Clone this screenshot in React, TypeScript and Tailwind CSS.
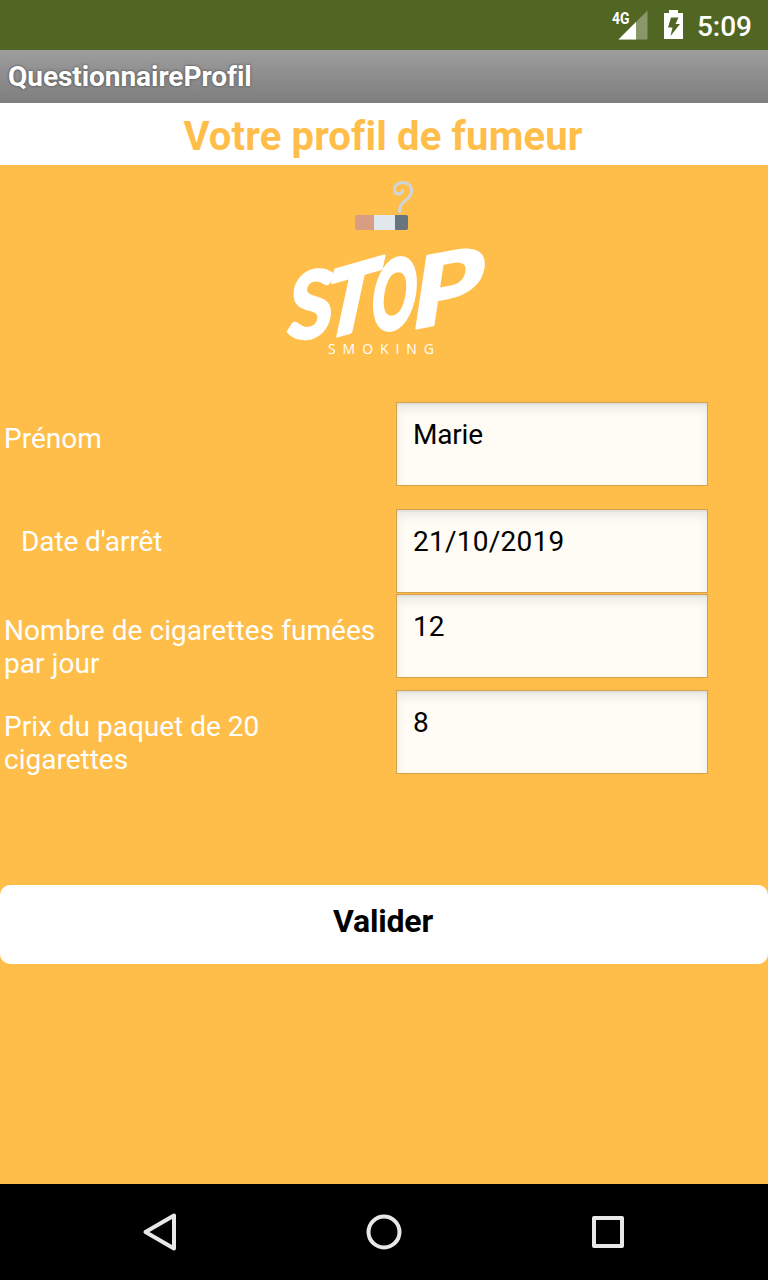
import { useState } from 'react';
import { clsx } from 'clsx';

interface Field {
  id: string;
  label: string;
  value: string;
  rowClass: string;
  labelClass: string;
  inputClass?: string;
}

const FIELDS: Field[] = [
  { id: 'prenom', label: 'Prénom', value: 'Marie', rowClass: 'h-[107px]', labelClass: 'pt-5 pl-1', inputClass: 'tracking-[-0.2px]' },
  { id: 'date', label: "Date d'arrêt", value: '21/10/2019', rowClass: 'h-[85px]', labelClass: 'pt-4 pl-[21px] tracking-[-0.1px]', inputClass: 'tracking-[0.25px]' },
  { id: 'nombre', label: 'Nombre de cigarettes fumées par jour', value: '12', rowClass: 'h-24', labelClass: 'pt-5 pl-1 tracking-[0.06px]' },
  { id: 'prix', label: 'Prix du paquet de 20 cigarettes', value: '8', rowClass: 'h-[195px]', labelClass: 'pt-5 pl-1 pr-20' },
];

function StatusBar() {
  return (
    <div className="h-[50px] shrink-0 bg-[#526623]">
      <svg viewBox="0 0 768 50" className="block h-[50px] w-[768px]" fontFamily="Roboto, sans-serif">
        <text x="612" y="24" fontSize="17" fontWeight="700" fill="#fff" textLength="17.5" lengthAdjust="spacingAndGlyphs">4G</text>
        <path d="M647.5 10.5V39.5H618.5Z" fill="#fff" fillOpacity=".32" />
        <path d="M636 22V39.5H618.5Z" fill="#fff" />
        <path fillRule="evenodd" d="M669 10h9v3h5v26h-19V13h5zM671 17.5h7.5l-3 6.500h4.500L670.500 36l2-8.500h-4.500z" fill="#fff" />
        <text x="697" y="36" fontSize="28" fontWeight="500" fill="#fff" textLength="55">5:09</text>
      </svg>
    </div>
  );
}

function Logo() {
  return (
    <svg viewBox="259 165 250 200" className="mx-auto block h-[200px] w-[250px]" fill="#fff">
      <rect x="355" y="215" width="53" height="15" rx="2.5" fill="#d99e82" />
      <path d="M374 215h21v15h-21z" fill="#e1e8ed" />
      <path d="M395 215h11a2 2 0 0 1 2 2v11a2 2 0 0 1-2 2h-11z" fill="#66757f" />
      <path
        d="M399.500 211.500C399 200 411.500 201 411.500 191C411.500 185.500 407.500 182.500 402.500 182.500C397.500 182.500 394.500 186 394.500 189.500C394.500 192.500 396.500 194 399 194C401.500 194 402.500 192 402.500 190.500"
        fill="none"
        stroke="#ccd6dd"
        strokeWidth="3"
        strokeLinecap="round"
      />
      <g fontFamily="Lato, sans-serif" fontWeight="900" fontSize="100" stroke="#fff" strokeLinejoin="round">
        <text transform="matrix(.82 -.06 -.11 .94 285 340)" strokeWidth="2">S</text>
        <text transform="matrix(.84 -.24 -.21 .97 319 341)" strokeWidth="4">T</text>
        <text transform="matrix(.54 -.02 -.14 .97 368 330)" strokeWidth="4">O</text>
        <text transform="matrix(1.12 -.21 -.15 1 408 330)" strokeWidth="2">P</text>
      </g>
      <text x="328" y="354" fontFamily="Open Sans, sans-serif" fontSize="14" textLength="106">SMOKING</text>
    </svg>
  );
}

function NavBar() {
  return (
    <div className="h-24 shrink-0 bg-black">
      <svg viewBox="0 0 768 96" className="block h-24 w-[768px]" fill="none" stroke="#e8e8e8" strokeWidth="4" strokeLinejoin="round">
        <path d="M174 31.5V64.5L145.5 48Z" />
        <circle cx="384" cy="48" r="15.5" />
        <rect x="594" y="34" width="28" height="28" />
      </svg>
    </div>
  );
}

export default function App() {
  const [values, setValues] = useState<Record<string, string>>(
    Object.fromEntries(FIELDS.map((f) => [f.id, f.value])),
  );

  return (
    <div className="flex h-[1280px] w-[768px] flex-col overflow-hidden bg-[#ffbe4a] font-[Roboto,sans-serif]">
      <StatusBar />
      <div className="flex h-[53px] shrink-0 items-center bg-linear-to-b from-[#9d9d9d] to-[#7e7e7e] px-2 text-[28px] font-bold tracking-[-0.05px] text-white [text-shadow:0_0_3px_#444]">
        QuestionnaireProfil
      </div>
      <h1 className="h-[62px] shrink-0 bg-white pr-[2px] text-center text-[40px] leading-[68px] font-bold tracking-[0.15px] text-[#ffbe4a]">
        Votre profil de fumeur
      </h1>

      <main className="flex-1">
        <Logo />
        <form className="pt-[37px]" onSubmit={(e) => e.preventDefault()}>
          {FIELDS.map((f) => (
            <div key={f.id} className={clsx('flex items-start', f.rowClass)}>
              <label htmlFor={f.id} className={clsx('w-[396px] text-[28px] leading-[33px] text-white', f.labelClass)}>
                {f.label}
              </label>
              <input
                id={f.id}
                type="text"
                value={values[f.id]}
                onChange={(e) => setValues({ ...values, [f.id]: e.target.value })}
                className={clsx(
                  'h-[84px] w-[312px] border border-[#d5a14b] bg-[#fffcf5] px-4 pt-[15px] pb-[34px] text-[28px] leading-[33px] text-black shadow-[inset_0_2px_1px_#e2e0dc,inset_0_6px_10px_#ebe9e4] outline-none',
                  f.inputClass,
                )}
              />
            </div>
          ))}
          <button type="submit" className="block h-[79px] w-full rounded-[10px] bg-white pr-[2px] pb-2 text-center text-[32px] font-bold tracking-[-0.2px] text-black">
            Valider
          </button>
        </form>
      </main>

      <NavBar />
    </div>
  );
}
